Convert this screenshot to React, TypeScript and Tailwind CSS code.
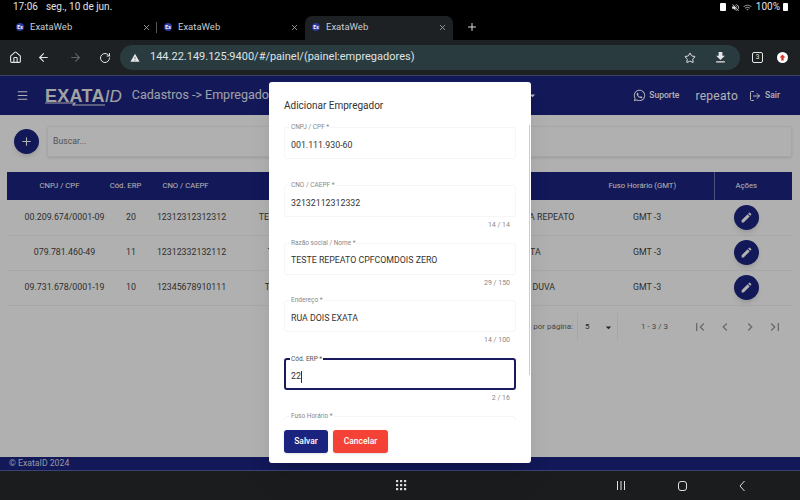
import React from 'react';
import { ArrowLeft, ArrowRight, Home, LogOut, Menu, Plus, RotateCw, Star, X } from 'lucide-react';
import { FaWhatsapp } from 'react-icons/fa';
import { MdArrowDropDown, MdChevronLeft, MdChevronRight, MdDownload, MdEdit, MdFirstPage, MdLastPage, MdWifi, MdVolumeOff, MdWarning } from 'react-icons/md';

const rows = [
  { doc: '00.209.674/0001-09', erp: '20', cno: '12312312312312', nome: 'TESTE REPEATO CPFCOMDOIS ZERO', end: 'TESTE EXATA REPEATO' },
  { doc: '079.781.460-49', erp: '11', cno: '12312332132112', nome: 'TESTE REPEATO CPF COM ZERO', end: 'EXATA' },
  { doc: '09.731.678/0001-19', erp: '10', cno: '12345678910111', nome: 'TESTE REPEATO CNPJ COM ZERO', end: 'RUA DA DUVA' },
];

function Favicon() {
  return (
    <span className="w-[8px] h-[8px] rounded-full bg-[#2b3a9e] flex items-center justify-center text-[5px] font-bold text-white leading-none shrink-0">Ex</span>
  );
}

function Tab({ active }: { active?: boolean }) {
  return (
    <div className={`w-[148px] h-[24px] flex items-center pb-[2px] pl-[7px] pr-[6px] ${active ? 'bg-[#1d2124] rounded-t-[7px]' : ''}`}>
      <Favicon />
      <span className="ml-[6px] text-[9.5px] text-[#c9cccf] flex-1">ExataWeb</span>
      <X size={9} className="text-[#b5b8bb]" />
    </div>
  );
}

function Field({ label, value, hint, focused, caret }: { label: string; value: string; hint?: string; focused?: boolean; caret?: boolean }) {
  return (
    <div className="h-[57.75px] shrink-0">
      <div className={`relative h-[32px] rounded-[3px] flex items-center pt-[5px] text-[8.8px] text-[#333] ${focused ? 'px-[5px] border-2 border-[#1a1a5e]' : 'px-[6px] border border-[#f5f5f5]'}`}>
        <span className={`absolute top-[-5px] bg-white px-[1px] text-[6.5px] leading-[9px] ${focused ? 'left-[4px] text-[#555]' : 'left-[5px] text-[#888]'}`}>{label}</span>
        {value}
        {caret && <span className="w-px h-[12px] bg-[#333]" />}
      </div>
      {hint && <div className="mt-[4px] pr-[6px] text-right text-[7px] leading-[9px] text-[#888]">{hint}</div>}
    </div>
  );
}

export default function App() {
  return (
    <div className="w-[800px] h-[500px] overflow-hidden flex flex-col bg-black font-['Roboto',sans-serif]">
      {/* Status bar */}
      <div className="h-[16px] shrink-0 flex items-start pt-[1px] justify-between pl-[13px] pr-[12px] text-[10px] leading-[12px] text-[#e2e2e2]">
        <div className="flex gap-[8px]">
          <span>17:06</span>
          <span>seg., 10 de jun.</span>
        </div>
        <div className="flex items-center gap-[3px]">
          <span className="w-[6px] h-[8px] rounded-[1px] bg-white mr-[2px]" />
          <MdVolumeOff size={9} />
          <MdWifi size={9} className="text-[#888] mr-[1px]" />
          <span>100%</span>
          <span className="w-[5px] h-[8px] rounded-[1px] bg-white" />
        </div>
      </div>

      {/* Tabs */}
      <div className="h-[24px] shrink-0 flex items-center pl-[9px]">
        <div className="relative flex">
          <Tab />
          <span className="absolute left-[147px] top-[6px] w-px h-[11px] bg-[#555]" />
          <Tab />
          <Tab active />
        </div>
        <Plus size={12} className="ml-[13px] mb-[2px] text-[#ddd]" />
      </div>

      {/* Browser toolbar */}
      <div className="h-[35px] shrink-0 bg-[#1d2124] flex items-center pl-[9px] text-[#e6e6e6]">
        <Home size={13} />
        <ArrowLeft size={13} className="ml-[15px]" />
        <ArrowRight size={13} className="ml-[19px] text-[#5f6365]" />
        <RotateCw size={12} className="ml-[17px]" />
        <div className="ml-[9px] w-[620px] h-[25px] rounded-full bg-[#2a3b40] flex items-center pl-[10px] pr-[12px]">
          <MdWarning size={10} />
          <span className="ml-[10px] flex-1 text-[11px] text-[#dfe3e4]">144.22.149.125:9400/#/painel/(painel:empregadores)</span>
          <Star size={12} />
          <MdDownload size={15} className="ml-[17px]" />
        </div>
        <span className="ml-[12px] w-[11px] h-[11px] border border-[#e6e6e6] rounded-[2px] flex items-center justify-center text-[6.5px]">3</span>
        <span className="ml-[14px] w-[11px] h-[11px] rounded-full bg-white flex items-center justify-center">
          <svg width="7" height="7" viewBox="0 0 7 7" fill="#d9342b">
            <path d="M3.5 0.5 L6.5 3.5 H4.7 V6.5 H2.3 V3.5 H0.5 Z" />
          </svg>
        </span>
      </div>

      {/* App */}
      <div className="relative flex-1 flex flex-col bg-[#fcfcfc] border-t border-[#3a4260]">
        <header className="h-[39px] shrink-0 bg-[#1a237e] flex items-center pl-[16px] pr-[20px] text-white">
          <Menu size={13} />
          <div className="relative ml-[16px] flex items-baseline leading-none">
            <span className="font-['Liberation_Sans',sans-serif] font-bold text-[18px] tracking-[0.3px] text-[#e8e8e8]">EXATA</span>
            <span className="font-['Liberation_Sans',sans-serif] italic text-[17px] text-[#e8e8e8]">ID</span>
            <svg className="absolute left-0 top-[15px]" width="62" height="4" viewBox="0 0 62 4">
              <path d="M0 1 H30 L28 3 H60" stroke="#e8e8e8" strokeWidth="1.2" fill="none" />
            </svg>
          </div>
          <div className="ml-[10px] w-[407px] flex items-center justify-between">
            <span className="text-[12.5px] text-[#e4e6f2]">Cadastros -&gt; Empregadores</span>
            <MdArrowDropDown size={13} />
          </div>
          <div className="ml-auto flex items-center">
            <FaWhatsapp size={13} />
            <span className="ml-[3px] text-[8.5px] font-medium">Suporte</span>
            <span className="ml-[16px] text-[12px] tracking-[0.3px]">repeato</span>
            <LogOut size={12} className="ml-[11px]" />
            <span className="ml-[4px] text-[8.5px] font-medium">Sair</span>
          </div>
        </header>

        <main className="flex-1 min-h-0 bg-[#fdfdfd]">
          <div className="flex items-center pl-[14px] pr-[8px] pt-[11px]">
            <button className="w-[25px] h-[25px] rounded-full bg-[#1a237e] text-white flex items-center justify-center shadow-md">
              <Plus size={13} />
            </button>
            <div className="ml-[8px] flex-1 h-[31px] bg-[#fdfdfd] border border-[#f0f0f0] rounded-[2px] shadow-sm flex items-center pl-[5px] text-[8.7px] text-[#777]">Buscar...</div>
          </div>

          <table className="mt-[15px] ml-[7px] w-[785px] table-fixed border-collapse text-[8.8px] text-[#444]">
            <colgroup>
              <col className="w-[100px]" />
              <col className="w-[43px]" />
              <col className="w-[85px]" />
              <col className="w-[240px]" />
              <col className="w-[105px]" />
              <col className="w-[134px]" />
              <col className="w-[78px]" />
            </colgroup>
            <thead>
              <tr className="h-[28px] bg-[#1a237e] text-[7.7px] text-white">
                <th className="font-normal pl-[5px]">CNPJ / CPF</th>
                <th className="font-normal pr-[6px]">Cód. ERP</th>
                <th className="font-normal pr-[14px]">CNO / CAEPF</th>
                <th className="font-normal pr-[46px]">Razão social / Nome</th>
                <th className="font-normal pr-[50px]">Endereço</th>
                <th className="font-normal pr-[9px]">Fuso Horário (GMT)</th>
                <th className="font-normal border-l border-[#6f75b0] pr-[14px]">Ações</th>
              </tr>
            </thead>
            <tbody>
              {rows.map((r) => (
                <tr key={r.doc} className="h-[35px] border-b border-[#f0f0f0] text-center">
                  <td className="pl-[15px]">{r.doc}</td>
                  <td className="pl-[5px]">{r.erp}</td>
                  <td className="pr-[2px]">{r.cno}</td>
                  <td className="pr-[46px]">{r.nome}</td>
                  <td>{r.end}</td>
                  <td>GMT -3</td>
                  <td className="pr-[14px]">
                    <button className="w-[25px] h-[25px] rounded-full bg-[#1a237e] text-white inline-flex items-center justify-center shadow-md align-middle">
                      <MdEdit size={13} />
                    </button>
                  </td>
                </tr>
              ))}
            </tbody>
          </table>

          <div className="h-[43px] pr-[17px] flex items-center justify-end text-[8px] text-[#666]">
            <span>Itens por página:</span>
            <div className="ml-[4px] w-[41px] h-[28px] border-x border-[#eee] flex items-center justify-between pl-[7px] pr-[2px] text-[#333]">
              5
              <MdArrowDropDown size={13} />
            </div>
            <span className="ml-[23px]">1 - 3 / 3</span>
            <div className="ml-[24px] flex gap-[9px] text-[#999]">
              <MdFirstPage size={16} />
              <MdChevronLeft size={16} />
              <MdChevronRight size={16} />
              <MdLastPage size={16} />
            </div>
          </div>
        </main>

        <footer className="h-[14px] shrink-0 bg-[#1a237e] border-b border-[#5560a8] pl-[9px] flex items-center text-[8.7px] text-[#d5d8ea]">© ExataID 2024</footer>

        {/* Backdrop */}
        <div className="absolute inset-0 bg-black/30" />

        {/* Dialog */}
        <div className="absolute left-[269px] top-[6px] w-[262px] h-[381px] bg-white rounded-[3px] shadow-xl flex flex-col px-[15px]">
          <h2 className="mt-[17px] h-[13px] text-[10px] leading-[13px] text-[#333]">Adicionar Empregador</h2>
          <span className="absolute right-[1px] top-[43px] w-px h-[250px] bg-[#ccc]" />
          <div className="mt-[9px] pt-[6px] h-[299px] overflow-hidden flex flex-col">
            <Field label="CNPJ / CPF *" value="001.111.930-60" />
            <Field label="CNO / CAEPF *" value="32132112312332" hint="14 / 14" />
            <Field label="Razão social / Nome *" value="TESTE REPEATO CPFCOMDOIS ZERO" hint="29 / 150" />
            <Field label="Endereço *" value="RUA DOIS EXATA" hint="14 / 100" />
            <Field label="Cód. ERP *" value="22" hint="2 / 16" focused caret />
            <Field label="Fuso Horário *" value="" />
          </div>
          <div className="absolute left-[15px] top-[348px] flex gap-[5px] text-[8.5px] font-medium text-white">
            <button className="w-[44px] h-[23px] rounded-[3px] bg-[#1a237e] shadow">Salvar</button>
            <button className="w-[55px] h-[23px] rounded-[3px] bg-[#f44336] shadow">Cancelar</button>
          </div>
        </div>
      </div>

      {/* Android nav bar */}
      <div className="h-[29px] shrink-0 bg-[#1a1c1e] flex items-center text-[#e0e0e0]">
        <svg className="ml-[396px]" width="11" height="11" viewBox="0 0 11 11" fill="currentColor">
          {[0, 4, 8].flatMap((y) => [0, 4, 8].map((x) => <rect key={`${x}-${y}`} x={x} y={y} width="2.2" height="2.2" />))}
        </svg>
        <svg className="ml-[209px]" width="10" height="11" viewBox="0 0 10 11" stroke="currentColor" fill="none">
          <path d="M1.5 1v9M5 1v9M8.5 1v9" />
        </svg>
        <span className="ml-[52px] w-[9px] h-[10px] rounded-[3px] border border-[#e0e0e0]" />
        <svg className="ml-[51px]" width="8" height="12" viewBox="0 0 8 12" stroke="currentColor" fill="none">
          <path d="M6.5 1 L2 6 L6.5 11" />
        </svg>
      </div>
    </div>
  );
}
